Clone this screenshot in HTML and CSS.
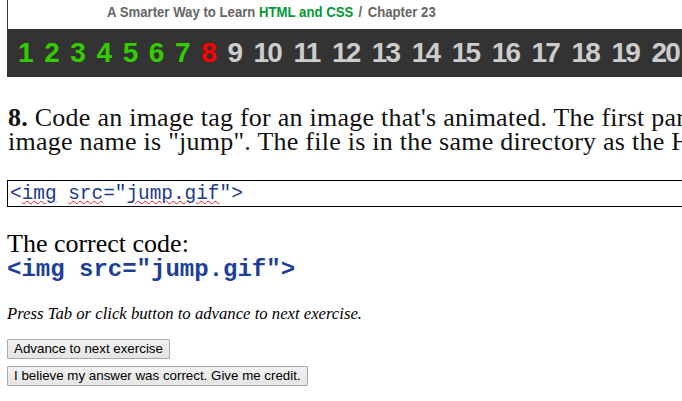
FILE: index.html
```html
<!DOCTYPE html>
<html>
<head>
<meta charset="utf-8">
<title>A Smarter Way to Learn HTML and CSS / Chapter 23</title>
<link rel="stylesheet" href="styles.css">
</head>
<body>
<div class="page">
  <header class="masthead">
    <div class="title">A Smarter Way to Learn <span class="brand">HTML and CSS</span> <span class="sep">/</span> Chapter 23</div>
  </header>
  <nav class="exercises">
    <a class="ex done">1</a><a class="ex done">2</a><a class="ex done">3</a><a class="ex done">4</a><a class="ex done">5</a><a class="ex done">6</a><a class="ex done">7</a><a class="ex current">8</a><a class="ex">9</a><a class="ex">10</a><a class="ex">11</a><a class="ex">12</a><a class="ex">13</a><a class="ex">14</a><a class="ex">15</a><a class="ex">16</a><a class="ex">17</a><a class="ex">18</a><a class="ex">19</a><a class="ex">20</a><a class="ex">21</a>
  </nav>
  <p class="question"><b>8.</b> Code an image tag for an image that's animated. The first part of the<br>image name is "jump". The file is in the same directory as the HTML file.</p>
  <div class="answer"><span class="code">&lt;<span class="sq">img</span> <span class="sq">src</span>="<span class="sq">jump.gif</span>"&gt;</span></div>
  <div class="correct-label">The correct code:</div>
  <div class="correct-code">&lt;img src="jump.gif"&gt;</div>
  <p class="hint">Press Tab or click button to advance to next exercise.</p>
  <div class="buttons">
    <button class="btn">Advance to next exercise</button>
    <button class="btn">I believe my answer was correct. Give me credit.</button>
  </div>
</div>
</body>
</html>
```
FILE: styles.css
```css
html, body {
  margin: 0;
  padding: 0;
  background: #ffffff;
  overflow: hidden;
}
.page {
  width: 900px;
  padding-left: 7px;
}
.masthead {
  height: 29px;
  border-left: 1px solid #333333;
  box-sizing: border-box;
  padding-left: 99px;
}
.title {
  display: inline-block;
  font-family: "Liberation Sans", Arial, sans-serif;
  font-weight: bold;
  font-size: 15.5px;
  line-height: 23px;
  color: #666666;
  white-space: nowrap;
  transform: scaleX(0.85);
  transform-origin: left center;
}
.brand { color: #009933; }
.sep { padding: 0 2px; }
.exercises {
  height: 48px;
  background: #333333;
  display: flex;
  align-items: center;
  gap: 12.4px;
  padding-left: 11px;
  font-family: "Liberation Sans", Arial, sans-serif;
  font-weight: bold;
  font-size: 28px;
  letter-spacing: -1.8px;
  line-height: 48px;
  white-space: nowrap;
}
.ex { color: #cccccc; }
.ex.done { color: #33cc00; }
.ex.current { color: #ff0000; }
.question {
  margin: 29px 0 0 1px;
  font-family: "Liberation Serif", "Times New Roman", serif;
  font-size: 26px;
  letter-spacing: 0.25px;
  line-height: 24px;
  color: #111111;
  white-space: nowrap;
}
.question b { font-weight: bold; }
.answer {
  margin-top: 26px;
  height: 27px;
  border: 1px solid #000000;
  box-sizing: border-box;
  padding-left: 2px;
  display: flex;
  align-items: center;
}
.code {
  font-family: "Liberation Mono", "Courier New", monospace;
  font-size: 19.4px;
  color: #1a3a8c;
  white-space: pre;
}
.sq {
  text-decoration: underline wavy #e02020;
  text-decoration-thickness: 1px;
  text-underline-offset: 1px;
}
.correct-label {
  margin-top: 24px;
  font-family: "Liberation Serif", Georgia, serif;
  font-size: 26px;
  line-height: 26px;
  color: #000000;
}
.correct-code {
  font-family: "Liberation Mono", "Courier New", monospace;
  font-weight: bold;
  font-size: 24px;
  line-height: 26px;
  color: #1c3f9a;
  white-space: pre;
}
.hint {
  margin: 22px 0 0 0;
  font-family: "Liberation Serif", Georgia, serif;
  font-style: italic;
  font-size: 16.7px;
  line-height: 18px;
  color: #000000;
}
.buttons {
  margin-top: 16px;
  display: flex;
  flex-direction: column;
  align-items: flex-start;
  gap: 7px;
}
.btn {
  height: 20px;
  padding: 0 6px;
  font-family: "Liberation Sans", Arial, sans-serif;
  font-size: 13.33px;
  color: #000000;
  background: linear-gradient(#f2f2f2, #e4e4e4);
  border: 1px solid #a9a9a9;
  border-radius: 1px;
  line-height: 18px;
}
```
